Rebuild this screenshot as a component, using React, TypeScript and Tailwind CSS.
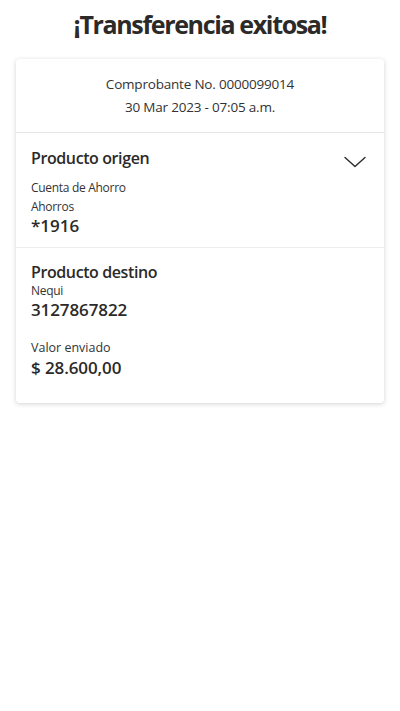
import React from 'react';

const Chevron: React.FC = () => (
  <svg width="22" height="12" viewBox="0 0 22 12" fill="none" className="mt-[10px] mr-[3px]">
    <path d="M1 1.5 L11 10.5 L21 1.5" stroke="#2c2a29" strokeWidth="1.4" strokeLinecap="round" strokeLinejoin="round" />
  </svg>
);

export default function App() {
  return (
    <div className="w-[400px] min-h-[711px] bg-white text-[#2c2a29] font-['Open_Sans','Noto_Sans',sans-serif]">
      <h1 className="pt-[6px] text-center text-[25px] leading-9 font-bold tracking-[-1.35px]">
        ¡Transferencia exitosa!
      </h1>

      <div className="mx-4 mt-[17px] rounded-[4px] bg-white shadow-[0_1px_5px_rgba(0,0,0,0.18)]">
        <div className="pt-[14px] pb-[13px] text-center text-[13.5px] leading-[23px] tracking-[-0.2px] text-[#333]">
          <p>Comprobante No. 0000099014</p>
          <p>30 Mar 2023 - 07:05 a.m.</p>
        </div>

        <div className="border-t border-[#e6e6e6] px-[15px] pt-[13px] pb-[11px]">
          <div className="flex items-start justify-between">
            <h2 className="text-[16px] leading-6 font-semibold tracking-[-0.4px]">Producto origen</h2>
            <Chevron />
          </div>
          <p className="mt-[8px] text-[12px] leading-[19px] tracking-[-0.3px] text-[#333]">Cuenta de Ahorro</p>
          <p className="text-[12px] leading-[19px] tracking-[-0.3px] text-[#333]">Ahorros</p>
          <p className="text-[17px] leading-5 font-semibold">*1916</p>
        </div>

        <div className="border-t border-[#eeeeee] px-[15px] pt-[14px] pb-[25px]">
          <h2 className="text-[16px] leading-5 font-semibold tracking-[-0.4px]">Producto destino</h2>
          <p className="text-[12px] leading-[18px] tracking-[-0.3px] text-[#333]">Nequi</p>
          <p className="text-[17px] leading-5 font-semibold tracking-[-0.1px]">3127867822</p>
          <p className="mt-[19px] text-[12.5px] leading-[18px] text-[#333]">Valor enviado</p>
          <p className="mt-[1px] text-[17px] leading-5 font-semibold tracking-[-0.1px]">$ 28.600,00</p>
        </div>
      </div>
    </div>
  );
}
